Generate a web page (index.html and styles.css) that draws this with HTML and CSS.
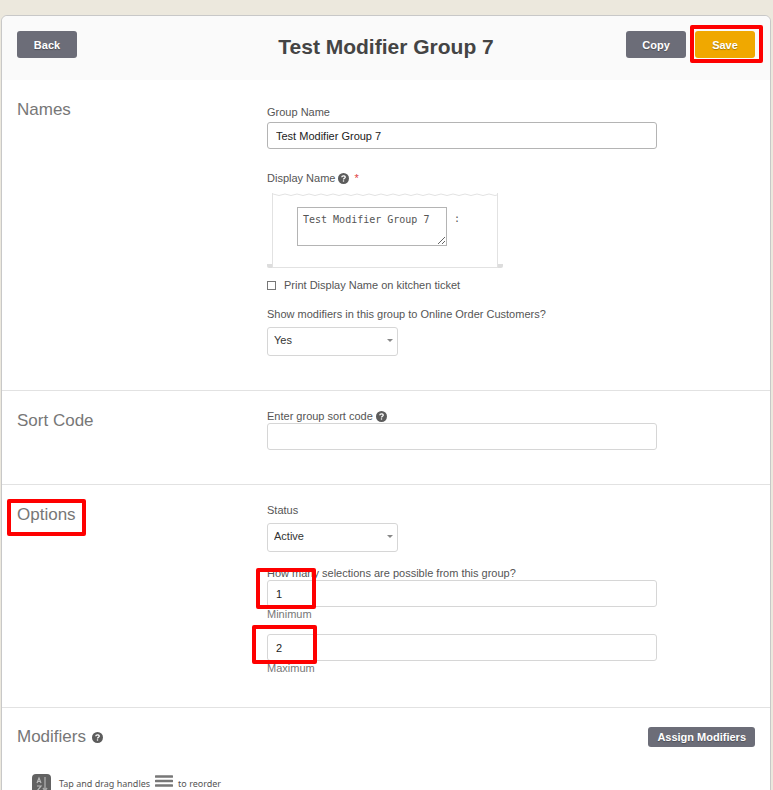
FILE: index.html
```html
<!DOCTYPE html>
<html lang="en">
<head>
    <meta charset="UTF-8">
    <meta name="viewport" content="width=device-width, initial-scale=1.0">
    <title>Test Modifier Group 7</title>
    <link rel="stylesheet" href="styles.css">
</head>
<body>
    <svg class="icon-defs" aria-hidden="true">
        <symbol id="help" viewBox="0 0 12 12">
            <circle cx="6" cy="6" r="6" fill="#5c5c5c"/>
            <path d="M4.1 4.7C4.1 2.5 7.9 2.5 7.9 4.6C7.9 5.8 6 5.8 6 7.2" fill="none" stroke="#fff" stroke-width="1.4"/>
            <rect x="5.3" y="8" width="1.4" height="1.4" fill="#fff"/>
        </symbol>
    </svg>

    <form class="card">
        <div class="card-header">
            <div class="header-left">
                <button type="button" class="btn">Back</button>
            </div>
            <h1 class="card-title">Test Modifier Group 7</h1>
            <div class="header-right">
                <button type="button" class="btn">Copy</button>
                <span class="marked">
                    <button type="submit" class="btn btn-save">Save</button>
                    <span class="mark mark-save"></span>
                </span>
            </div>
        </div>

        <section class="section">
            <h2 class="section-title">Names</h2>
            <div class="fields fields-names">
                <label for="groupName">Group Name</label>
                <input type="text" id="groupName" class="text-input input-dark" value="Test Modifier Group 7">

                <div class="label-row display-label">
                    <label for="displayName">Display Name</label>
                    <svg class="help"><use href="#help"/></svg>
                    <span class="required">*</span>
                </div>
                <div class="receipt">
                    <div class="receipt-paper">
                        <svg class="receipt-edge" aria-hidden="true">
                            <defs>
                                <pattern id="wave" width="12" height="4" patternUnits="userSpaceOnUse">
                                    <path d="M0 1Q6 4 12 1" fill="none" stroke="#e2e2e2"/>
                                </pattern>
                            </defs>
                            <rect width="100%" height="4" fill="url(#wave)"/>
                        </svg>
                        <div class="receipt-line">
                            <textarea id="displayName" class="display-name">Test Modifier Group 7</textarea>
                            <span>:</span>
                        </div>
                    </div>
                </div>
                <div class="check-row">
                    <input type="checkbox" id="printName" class="check">
                    <label for="printName">Print Display Name on kitchen ticket</label>
                </div>

                <label for="showOnline">Show modifiers in this group to Online Order Customers?</label>
                <select id="showOnline" class="select">
                    <option>Yes</option>
                    <option>No</option>
                </select>
            </div>
        </section>

        <section class="section">
            <h2 class="section-title">Sort Code</h2>
            <div class="fields">
                <div class="label-row">
                    <label for="sortCode">Enter group sort code</label>
                    <svg class="help"><use href="#help"/></svg>
                </div>
                <input type="text" id="sortCode" class="text-input">
            </div>
        </section>

        <section class="section section-options">
            <h2 class="section-title"><span class="marked">Options<span class="mark mark-options"></span></span></h2>
            <div class="fields">
                <label for="status">Status</label>
                <select id="status" class="select status-select">
                    <option>Active</option>
                    <option>Inactive</option>
                </select>

                <label for="minimum">How many selections are possible from this group?</label>
                <div class="marked">
                    <input type="text" id="minimum" class="text-input" value="1">
                    <span class="mark mark-min"></span>
                </div>
                <label for="minimum" class="hint">Minimum</label>
                <div class="marked max-field">
                    <input type="text" id="maximum" class="text-input" value="2">
                    <span class="mark mark-max"></span>
                </div>
                <label for="maximum" class="hint">Maximum</label>
            </div>
        </section>

        <section class="modifiers">
            <div class="modifiers-head">
                <h2 class="section-title">Modifiers</h2>
                <svg class="help"><use href="#help"/></svg>
                <button type="button" class="btn btn-small">Assign Modifiers</button>
            </div>
            <div class="reorder">
                <button type="button" class="sort-button" aria-label="Sort A to Z">
                    <svg width="19" height="20" viewBox="0 0 19 20">
                        <rect width="19" height="20" rx="4" fill="#626262"/>
                        <path d="M5 9L7 4L9 9M5.7 7.5H8.3M5 12H9L5 17H9" fill="none" stroke="#bcbcbc" stroke-width="1.2"/>
                        <path d="M13 3V16M11 14L13 17L15 14" fill="none" stroke="#a8a8a8" stroke-width="1.4"/>
                    </svg>
                </button>
                <span>Tap and drag handles</span>
                <svg class="handle" width="18" height="13" viewBox="0 0 18 13">
                    <path d="M1 2.5H17M1 7H17M1 11.5H17" stroke="#777" stroke-width="2.6" stroke-linecap="round"/>
                </svg>
                <span>to reorder</span>
            </div>
        </section>
    </form>
</body>
</html>
```

FILE: styles.css
```css
* {
    box-sizing: border-box;
}
body {
    font-family: "Liberation Sans", Arial, sans-serif;
    font-size: 11px;
    line-height: 14px;
    margin: 0;
    padding: 15px 2px 0 1px;
    height: 100vh;
    overflow: hidden;
    background-color: #ece8dd;
    color: #555;
}
input,
select,
button,
textarea {
    font-family: inherit;
    font-size: 11px;
    margin: 0;
}
label {
    display: block;
}
.icon-defs {
    display: none;
}
.card {
    background-color: #fff;
    border: 1px solid #c8c8c8;
    border-radius: 6px;
    min-height: 100vh;
}
.card-header {
    display: grid;
    grid-template-columns: 1fr auto 1fr;
    align-items: start;
    height: 64px;
    padding: 15px;
    background-color: #fafafa;
    border-radius: 6px 6px 0 0;
}
.header-right {
    display: flex;
    justify-content: flex-end;
    gap: 9px;
}
.card-title {
    margin: 0;
    font-size: 21px;
    line-height: 32px;
    color: #444;
}
.btn {
    width: 60px;
    height: 27px;
    padding: 0;
    border: none;
    border-radius: 3px;
    background-color: #6c6d78;
    color: #fff;
    font-weight: bold;
    text-shadow: 0 1px 1px rgba(0, 0, 0, 0.3);
    cursor: pointer;
}
.header-left,
.header-right .marked {
    display: flex;
}
.btn-save {
    background-color: #f0a800;
}
.btn-small {
    width: auto;
    height: 20px;
    margin-left: auto;
    padding: 0 9px;
}

/* red callout boxes */
.marked {
    position: relative;
}
.mark {
    position: absolute;
    border: 4px solid #fe0000;
    border-radius: 2px;
    pointer-events: none;
}
.mark-save {
    inset: -6px -8px -5px -5px;
}
.mark-options {
    inset: -6px -10px -12px -10px;
}
.mark-min {
    top: -12px;
    left: -11px;
    width: 60px;
    height: 41px;
}
.mark-max {
    top: -9px;
    left: -15px;
    width: 65px;
    height: 39px;
}

.section {
    display: grid;
    grid-template-columns: 250px minmax(0, 390px);
    padding: 18px 15px 34px;
    border-bottom: 1px solid #e2e2e2;
}
.section-options {
    padding-bottom: 32px;
}
.section-title {
    margin: 0;
    font-size: 17px;
    font-weight: normal;
    line-height: 24px;
    color: #777;
}
.fields-names {
    padding-top: 7px;
}
.text-input {
    display: block;
    width: 100%;
    height: 27px;
    padding: 0 8px;
    border: 1px solid #d6d6d6;
    border-radius: 3px;
    background-color: #fff;
    color: #222;
}
.input-dark {
    margin-top: 3px;
    border-color: #b4b4b4;
}
.label-row {
    display: flex;
    align-items: center;
    gap: 3px;
}
.display-label {
    margin-top: 22px;
}
.help {
    width: 11px;
    height: 11px;
}
.required {
    margin-left: 2px;
    color: #e04040;
}
.receipt {
    width: 236px;
    margin-top: 8px;
    padding: 0 5px;
    background: linear-gradient(#ddd, #ddd) bottom / 100% 4px no-repeat;
    border-radius: 2px;
}
.receipt-paper {
    height: 75px;
    border: solid #e2e2e2;
    border-width: 0 1px 1px;
    background-color: #fff;
}
.receipt-edge {
    display: block;
    width: 100%;
    height: 4px;
}
.receipt-line {
    display: flex;
    gap: 7px;
    padding: 10px 24px 0;
    font-family: "DejaVu Sans Mono", monospace;
    font-size: 10px;
    line-height: 24px;
}
.display-name {
    width: 150px;
    height: 39px;
    padding: 4px 5px;
    border: 1px solid #b4b4b4;
    font-family: inherit;
    font-size: 10px;
    line-height: 15px;
    color: #555;
}
.check-row {
    display: flex;
    align-items: center;
    gap: 8px;
    margin: 10px 0 15px;
}
.check {
    appearance: none;
    width: 9px;
    height: 9px;
    border: 1px solid #777;
    background-color: #fff;
}
.check:checked {
    background-color: #6c6d78;
}
.select {
    display: block;
    appearance: none;
    width: 131px;
    height: 29px;
    margin-top: 6px;
    padding: 0 20px 3px 6px;
    border: 1px solid #d6d6d6;
    border-radius: 3px;
    background: #fff url("data:image/svg+xml,%3Csvg xmlns='http://www.w3.org/2000/svg' width='6' height='3'%3E%3Cpath d='M0 0H6L3 3Z' fill='%23888'/%3E%3C/svg%3E") right 4px top 11px no-repeat;
    color: #333;
}
.status-select {
    margin-bottom: 14px;
}
.hint {
    color: #777;
}
.max-field {
    margin-top: 13px;
}

.modifiers {
    padding: 17px 15px;
}
.modifiers-head {
    display: flex;
    align-items: center;
    gap: 6px;
}
.reorder {
    display: flex;
    align-items: center;
    margin-top: 25px;
    padding-left: 15px;
    font-family: "Noto Sans", sans-serif;
    font-size: 9px;
}
.sort-button {
    display: flex;
    margin-right: 8px;
    padding: 0;
    border: none;
    background: none;
    cursor: pointer;
}
.handle {
    margin: 0 5px;
    align-self: flex-start;
}
```
